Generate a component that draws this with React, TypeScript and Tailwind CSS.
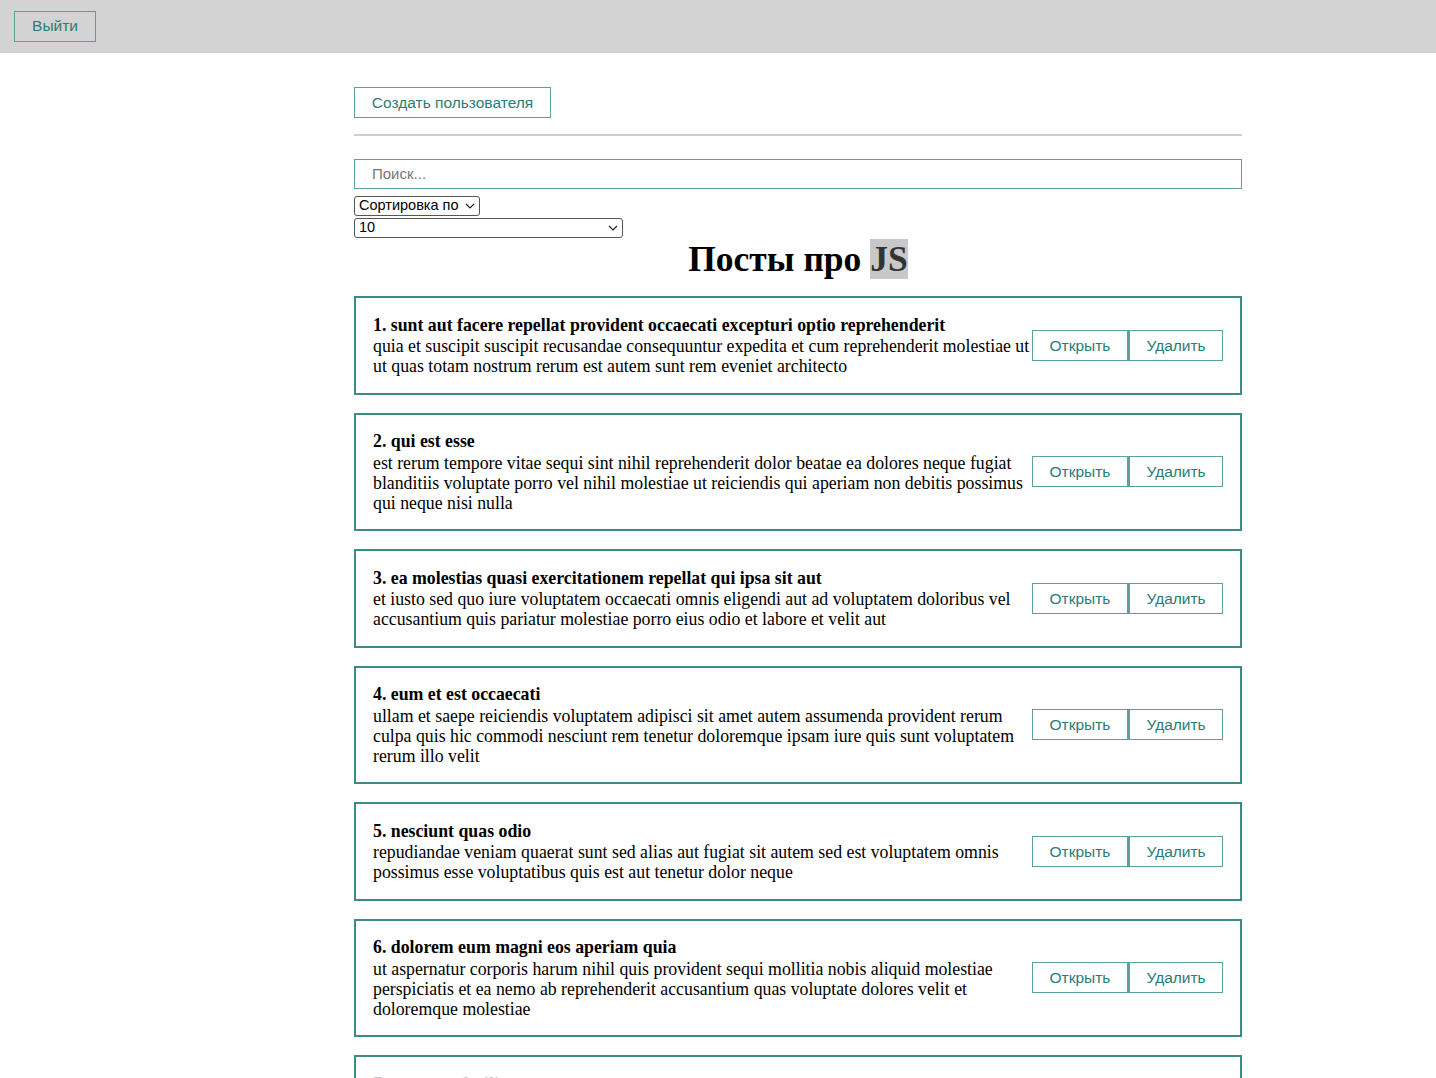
import React from 'react';

type Post = { id: number; title: string; body: string };

const posts: Post[] = [
  {
    id: 1,
    title: 'sunt aut facere repellat provident occaecati excepturi optio reprehenderit',
    body: 'quia et suscipit suscipit recusandae consequuntur expedita et cum reprehenderit molestiae ut ut quas totam nostrum rerum est autem sunt rem eveniet architecto',
  },
  {
    id: 2,
    title: 'qui est esse',
    body: 'est rerum tempore vitae sequi sint nihil reprehenderit dolor beatae ea dolores neque fugiat blanditiis voluptate porro vel nihil molestiae ut reiciendis qui aperiam non debitis possimus qui neque nisi nulla',
  },
  {
    id: 3,
    title: 'ea molestias quasi exercitationem repellat qui ipsa sit aut',
    body: 'et iusto sed quo iure voluptatem occaecati omnis eligendi aut ad voluptatem doloribus vel accusantium quis pariatur molestiae porro eius odio et labore et velit aut',
  },
  {
    id: 4,
    title: 'eum et est occaecati',
    body: 'ullam et saepe reiciendis voluptatem adipisci sit amet autem assumenda provident rerum culpa quis hic commodi nesciunt rem tenetur doloremque ipsam iure quis sunt voluptatem rerum illo velit',
  },
  {
    id: 5,
    title: 'nesciunt quas odio',
    body: 'repudiandae veniam quaerat sunt sed alias aut fugiat sit autem sed est voluptatem omnis possimus esse voluptatibus quis est aut tenetur dolor neque',
  },
  {
    id: 6,
    title: 'dolorem eum magni eos aperiam quia',
    body: 'ut aspernatur corporis harum nihil quis provident sequi mollitia nobis aliquid molestiae perspiciatis et ea nemo ab reprehenderit accusantium quas voluptate dolores velit et doloremque molestiae',
  },
  {
    id: 7,
    title: 'magnam facilis autem',
    body: 'dolore placeat quibusdam ea quo vitae magni quis enim qui quis quo nemo aut saepe quidem repellat excepturi ut quia sunt ut sequi eos ea sed quas',
  },
];

const Btn: React.FC<{ children: React.ReactNode; className?: string }> = ({ children, className = '' }) => (
  <button
    className={`h-[31px] border border-[#5c9f9b] bg-transparent px-[16.5px] font-['Liberation_Sans',Arial,sans-serif] text-[15.5px] leading-none text-[#2b7b76] ${className}`}
  >
    {children}
  </button>
);

const Chevron: React.FC = () => (
  <svg width="10" height="6" viewBox="0 0 10 6" fill="none" stroke="#222" strokeWidth="1.2">
    <path d="M1 1l4 4 4-4" />
  </svg>
);

const PostItem: React.FC<{ post: Post; faded?: boolean }> = ({ post, faded }) => (
  <div
    className={`flex items-center justify-between border-2 border-[#3e8a85] px-[17px] py-[16.5px] font-['Liberation_Serif','Times_New_Roman',serif] text-[17.8px] ${faded ? 'text-[#c4c4c4]' : 'text-black'}`}
  >
    <div className="min-w-0 flex-1">
      <strong className="block font-bold leading-[21.5px]">
        {post.id}. {post.title}
      </strong>
      <div className="leading-[20px]">{post.body}</div>
    </div>
    <div className="flex shrink-0">
      <Btn className="w-[96px]">Открыть</Btn>
      <Btn className="w-[95px] border-l-2">Удалить</Btn>
    </div>
  </div>
);

export default function App() {
  return (
    <div className="min-h-screen bg-white">
      <div className="flex h-[53px] items-center bg-[#d3d3d3] pb-px pl-[14px]">
        <Btn className="w-[82px] px-0">Выйти</Btn>
      </div>

      <div className="ml-[354px] w-[888px] pb-10">
        <div className="pt-[34px]">
          <Btn className="w-[197px] px-0">Создать пользователя</Btn>
        </div>
        <div className="mt-[16px] h-[2px] bg-[#cfcfcf]" />
        <div className="mt-[23px] flex h-[30px] items-center border border-[#5c9f9b] pl-[17px] font-['Liberation_Sans',Arial,sans-serif] text-[15px] text-[#777]">
          Поиск...
        </div>
        <div className="mt-[7px] flex h-[20px] w-[126px] items-center justify-between rounded-[3px] border border-[#555] px-[4px] font-['Liberation_Sans',Arial,sans-serif] text-[14.5px] text-black">
          <span>Сортировка по</span>
          <Chevron />
        </div>
        <div className="mt-[2px] flex h-[20px] w-[269px] items-center justify-between rounded-[3px] border border-[#555] pl-[4px] pr-[4px] font-['Liberation_Sans',Arial,sans-serif] text-[14.5px] text-black">
          <span>10</span>
          <Chevron />
        </div>
        <h1 className="mt-px text-center font-['Liberation_Serif','Times_New_Roman',serif] text-[35.5px] font-bold leading-[40px] text-black">
          Посты про <span className="bg-[#c8c8c8] text-[#333]">JS</span>
        </h1>

        <div className="mt-[17px] flex flex-col gap-[18px]">
          {posts.map((p) => (
            <PostItem key={p.id} post={p} faded={p.id === 7} />
          ))}
        </div>
      </div>
    </div>
  );
}
